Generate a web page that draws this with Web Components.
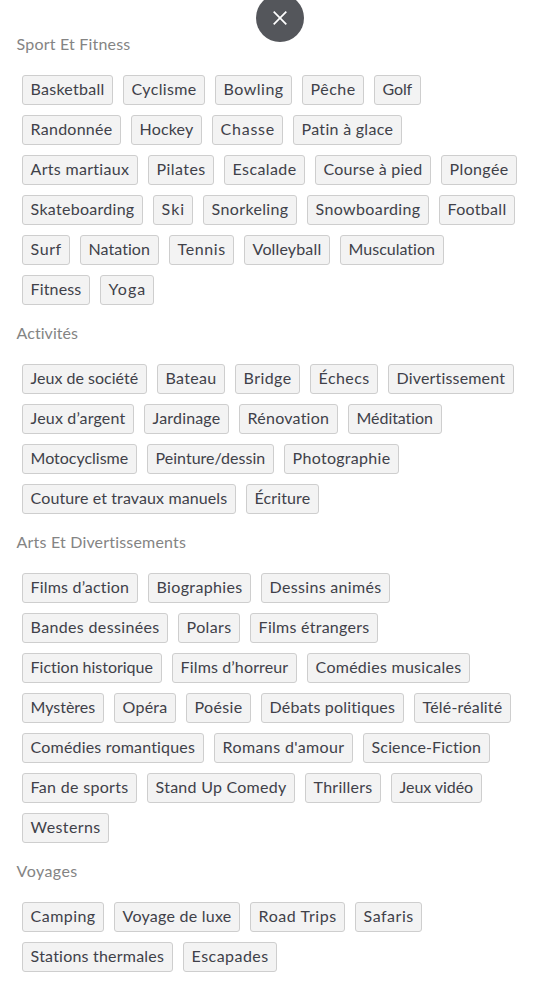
<!DOCTYPE html>
<html lang="fr">
<head>
<meta charset="utf-8">
<title>Centres d’intérêt</title>
<style>
html, body { margin: 0; height: 981px; overflow: hidden; background: #fff; }
body { font: 400 16px/24px Lato, "Open Sans", sans-serif; }
</style>
</head>
<body>
<interest-panel></interest-panel>
<script>
// Spreads the letters of a label so that it fills the given width.
function fitLabel(label, width) {
  const count = label.assignedText.length - 1;
  const natural = label.node.getBoundingClientRect().width;
  label.node.style.letterSpacing = ((width - natural) / count).toFixed(3) + 'px';
}

class InterestTag extends HTMLElement {
  constructor() {
    super();
    this.attachShadow({ mode: 'open' }).innerHTML = `
      <style>
        :host { display: block; box-sizing: border-box; height: 30px; padding: 0 7.6px;
          border: 1px solid #cecece; border-radius: 3px; background: #f3f3f3;
          color: #404149; line-height: 26px; white-space: nowrap; }
        span { display: inline-block; }
      </style><span><slot></slot></span>`;
  }
  connectedCallback() {
    const width = Number(this.getAttribute('width'));
    this.style.width = width + 'px';
    fitLabel({ node: this.shadowRoot.querySelector('span'), assignedText: this.textContent }, width - 17.4);
  }
}
customElements.define('interest-tag', InterestTag);

class InterestGroup extends HTMLElement {
  constructor() {
    super();
    this.attachShadow({ mode: 'open' }).innerHTML = `
      <style>
        :host { display: block; }
        h2 { margin: 0 0 19px; padding-left: 0.6px; font: inherit; color: #848484; line-height: 24px; white-space: nowrap; }
        h2 span { display: inline-block; }
        div { display: flex; flex-wrap: wrap; gap: 10px; padding-left: 6px; }
      </style><h2><span></span></h2><div><slot></slot></div>`;
  }
  connectedCallback() {
    const title = this.getAttribute('heading');
    const node = this.shadowRoot.querySelector('span');
    node.textContent = title;
    fitLabel({ node, assignedText: title }, Number(this.getAttribute('heading-width')));
  }
}
customElements.define('interest-group', InterestGroup);

class CloseButton extends HTMLElement {
  constructor() {
    super();
    this.attachShadow({ mode: 'open' }).innerHTML = `
      <style>
        :host { position: absolute; left: 256px; top: -6px; display: grid; place-items: center;
          width: 48px; height: 48px; border-radius: 50%; background: #54565b; }
        svg { display: block; }
      </style>
      <svg width="16" height="16" viewBox="0 0 16 16" fill="none" stroke="#fff" stroke-width="1.7"><path d="M1.7 1.7 14.3 14.3M14.3 1.7 1.7 14.3"/></svg>`;
  }
}
customElements.define('close-button', CloseButton);

const GROUPS = [
  ['Sport Et Fitness', 113.6, [
    ['Basketball', 91], ['Cyclisme', 82], ['Bowling', 77], ['Pêche', 62], ['Golf', 47],
    ['Randonnée', 99], ['Hockey', 71], ['Chasse', 71], ['Patin à glace', 109],
    ['Arts martiaux', 116], ['Pilates', 66], ['Escalade', 81], ['Course à pied', 116], ['Plongée', 76],
    ['Skateboarding', 121], ['Ski', 40], ['Snorkeling', 94], ['Snowboarding', 122], ['Football', 76],
    ['Surf', 48], ['Natation', 79], ['Tennis', 65], ['Volleyball', 86], ['Musculation', 104],
    ['Fitness', 68], ['Yoga', 54]]],
  ['Activités', 61.6, [
    ['Jeux de société', 125], ['Bateau', 68], ['Bridge', 65], ['Échecs', 68], ['Divertissement', 126],
    ['Jeux d’argent', 112], ['Jardinage', 85], ['Rénovation', 99], ['Méditation', 94],
    ['Motocyclisme', 115], ['Peinture/dessin', 127], ['Photographie', 115],
    ['Couture et travaux manuels', 214], ['Écriture', 73]]],
  ['Arts Et Divertissements', 169.6, [
    ['Films d’action', 116], ['Biographies', 103], ['Dessins animés', 129],
    ['Bandes dessinées', 146], ['Polars', 62], ['Films étrangers', 128],
    ['Fiction historique', 140], ['Films d’horreur', 125], ['Comédies musicales', 163],
    ['Mystères', 82], ['Opéra', 62], ['Poésie', 65], ['Débats politiques', 143], ['Télé-réalité', 97],
    ['Comédies romantiques', 182], ["Romans d'amour", 139], ['Science-Fiction', 127],
    ['Fan de sports', 115], ['Stand Up Comedy', 148], ['Thrillers', 76], ['Jeux vidéo', 91],
    ['Westerns', 87]]],
  ['Voyages', 60.6, [
    ['Camping', 82], ['Voyage de luxe', 126], ['Road Trips', 95], ['Safaris', 67],
    ['Stations thermales', 151], ['Escapades', 94]]]
];

class InterestPanel extends HTMLElement {
  constructor() {
    super();
    this.attachShadow({ mode: 'open' }).innerHTML = `
      <style>
        :host { position: relative; display: flex; flex-direction: column; gap: 16px;
          box-sizing: border-box; height: 981px; padding: 32px 29px 0 16px; overflow: hidden; }
      </style>
      <close-button role="button" aria-label="Fermer"></close-button>` +
      GROUPS.map(([title, width, tags]) =>
        `<interest-group heading="${title}" heading-width="${width}">` +
        tags.map(([name, w]) => `<interest-tag width="${w}">${name}</interest-tag>`).join('') +
        `</interest-group>`).join('');
  }
}
customElements.define('interest-panel', InterestPanel);
</script>
</body>
</html>
